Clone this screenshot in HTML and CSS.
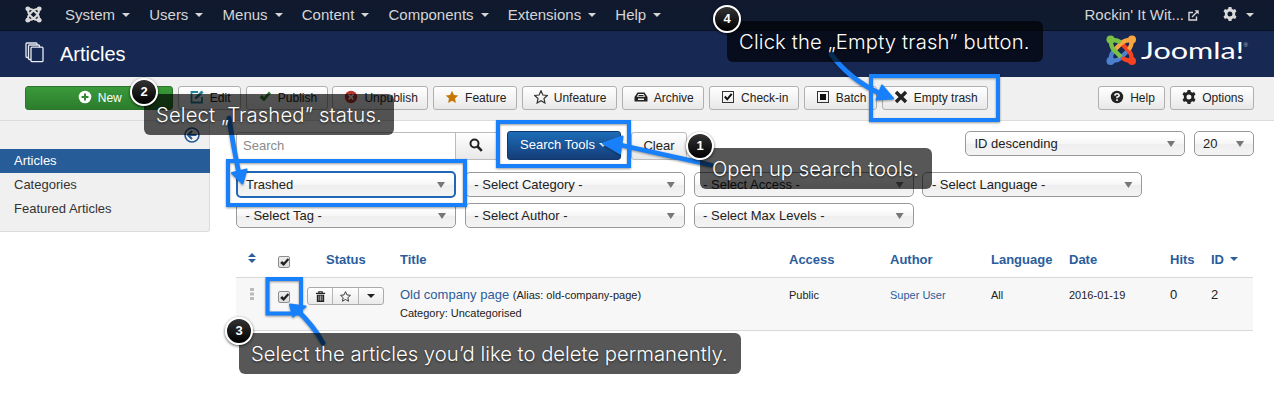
FILE: index.html
```html
<!DOCTYPE html>
<html lang="en">
<head>
<meta charset="utf-8">
<title>Articles</title>
<link rel="stylesheet" href="styles.css">
</head>
<body>
<svg class="defs" width="0" height="0">
  <symbol id="gear" viewBox="0 0 14 14"><path fill-rule="evenodd" d="M5.6 0h2.8l.4 1.8 1.5.9 1.8-.6 1.4 2.4L12.100 5.800v2.400l1.400 1.300-1.400 2.400-1.800-.6-1.500.9-.4 1.800H5.600l-.4-1.800-1.500-.9-1.800.6L.5 9.500l1.400-1.300V5.800L.5 4.500l1.400-2.400 1.800.6 1.500-.9zM7 4.500a2.500 2.500 0 1 0 0 5 2.500 2.500 0 0 0 0-5z"/></symbol>
  <symbol id="star" viewBox="0 0 14 14"><path d="M7 .8l1.900 4.200 4.400.5-3.300 3 .9 4.500L7 10.800 3.100 13l.9-4.500-3.300-3 4.400-.5z"/></symbol>
  <symbol id="tick" viewBox="0 0 14 14"><path d="M1.500 7.500L4 5l2 2 5-5.500L13 3.500 6 11.500z"/></symbol>
</svg>
<div class="page">
  <nav class="navbar">
    <svg class="brand" viewBox="0 0 18 18"><g fill="none" stroke="#d9d9d9" stroke-width="2.200"><path d="M3.200 4Q3 7.500 5 9.500L9 13.500M4 3.200Q7.500 3 9.500 5L10.500 6M14.800 4Q15 7.500 13 9.500L12 10.500M14 3.200Q10.500 3 8.500 5L4.500 9M14.800 14Q15 10.500 13 8.500L9 4.500M14 14.800Q10.500 15 8.500 13L7.500 12M3.200 14Q3 10.500 5 8.500M4 14.800Q7.500 15 9.500 13L13.500 9"/></g><g fill="#d9d9d9"><circle cx="3" cy="3" r="2.600"/><circle cx="15" cy="3" r="2.600"/><circle cx="3" cy="15" r="2.600"/><circle cx="15" cy="15" r="2.600"/></g></svg>
    <ul class="menu">
      <li>System<i class="caret"></i></li><li>Users<i class="caret"></i></li><li>Menus<i class="caret"></i></li><li>Content<i class="caret"></i></li><li>Components<i class="caret"></i></li><li>Extensions<i class="caret"></i></li><li>Help<i class="caret"></i></li>
    </ul>
    <div class="site">Rockin' It Wit...
      <svg class="ext" viewBox="0 0 11 11" fill="none" stroke="#d9d9d9" stroke-width="1.400"><path d="M5 2.500H1v7.500h7.500V6.500M4 7l5.500-5.500"/><path d="M6.500.3h4.200v4.200z" fill="#d9d9d9" stroke="none"/></svg>
    </div>
    <div class="user"><svg class="gear" fill="#d9d9d9"><use href="#gear"/></svg><i class="caret"></i></div>
  </nav>

  <header class="header">
    <svg class="stack" viewBox="0 0 19 21" fill="#172853" stroke="#e8ecf4" stroke-width="1.300"><rect x="1" y="1" width="11" height="14.500" rx="1"/><rect x="3.500" y="3" width="11" height="14.500" rx="1"/><rect x="6" y="5.200" width="12" height="14.500" rx="1"/></svg>
    <h1>Articles</h1>
    <svg class="logo" viewBox="0 0 146 32" role="img">
      <g fill="none" stroke-width="4.400">
        <path stroke="#4b80cf" d="M5 25.500Q11 26.500 15 22.500L22 15.500M5 25Q4.500 19 8 15.500"/>
        <path stroke="#f44321" d="M25.500 25Q26 19 22.500 15.500L15.500 8.500M25.500 25.500Q19.500 26 16 22.500"/>
        <path stroke="#f9a541" d="M25 5Q19.500 4.500 15.500 8L8.500 15M25.500 5.500Q26 11 22.500 14.500"/>
        <path stroke="#7ac143" d="M5 5.500Q4.500 11 8 15L15 22M5 5Q11 4.500 14.500 7.500"/>
      </g>
      <circle cx="4.500" cy="4.500" r="4" fill="#7ac143"/><circle cx="26" cy="4.500" r="4" fill="#f9a541"/><circle cx="4.500" cy="26" r="4" fill="#4b80cf"/><circle cx="26" cy="26" r="4" fill="#f44321"/>
      <text class="wordmark" x="35" y="23.500" textLength="103" lengthAdjust="spacingAndGlyphs">Joomla!</text>
      <text class="reg" x="137.500" y="12">®</text>
    </svg>
  </header>

  <div class="toolbar">
    <button class="btn new"><svg viewBox="0 0 14 14"><circle cx="7" cy="7" r="6.300" fill="#fff"/><path d="M7 3.500v7M3.500 7h7" stroke="#348a34" stroke-width="2"/></svg>New</button>
    <button class="btn"><svg viewBox="0 0 14 14" fill="none" stroke="#2384a0" stroke-width="1.800"><path d="M8 2H1.500v10.500H12V7"/><path d="M4.500 9.500l1-3L11.500.5l2 2-6 6z" fill="#2384a0" stroke="none"/></svg>Edit</button>
    <button class="btn"><svg fill="#378137"><use href="#tick"/></svg>Publish</button>
    <button class="btn"><svg viewBox="0 0 14 14"><circle cx="7" cy="7" r="6.200" fill="#bd362f"/><path d="M4.600 4.600l4.800 4.800M9.400 4.600L4.600 9.400" stroke="#fff" stroke-width="1.500"/></svg>Unpublish</button>
    <button class="btn"><svg fill="#c67605"><use href="#star"/></svg>Feature</button>
    <button class="btn"><svg fill="none" stroke="#333" stroke-width="1.200"><use href="#star"/></svg>Unfeature</button>
    <button class="btn"><svg viewBox="0 0 14 14" fill="#222"><path fill-rule="evenodd" d="M3.500 2.500h7L13.500 7v4.500H.5V7zM4.300 4L2.700 6.800h8.600L9.700 4zM4 8.500V10h6V8.500z"/><path d="M4.500 5h5v1h-5z"/></svg>Archive</button>
    <button class="btn"><svg viewBox="0 0 14 14" fill="none" stroke="#333"><rect x="1.500" y="1.500" width="11" height="11"/><path d="M3.800 6.500l2.400 2.800 4.500-5.500" stroke="#111" stroke-width="2"/></svg>Check-in</button>
    <button class="btn"><svg viewBox="0 0 14 14"><rect x="1.500" y="1.500" width="11" height="11" fill="none" stroke="#333"/><path d="M4 4h6v6H4z" fill="#111"/></svg>Batch</button>
    <button class="btn"><svg viewBox="0 0 14 14"><path d="M2 2l10 10M12 2L2 12" stroke="#222" stroke-width="3.400"/></svg>Empty trash</button>
    <button class="btn help"><svg viewBox="0 0 14 14"><circle cx="7" cy="7" r="6.200" fill="#222"/><path d="M4.800 5.600Q5 3.700 7 3.700T9.200 5.400Q9.200 6.500 7 7.200V8.300M7 9.300v1.600" fill="none" stroke="#fff" stroke-width="1.600"/></svg>Help</button>
    <button class="btn"><svg fill="#222"><use href="#gear"/></svg>Options</button>
  </div>

  <div class="content">
    <aside class="sidebar">
      <svg class="collapse" viewBox="0 0 16 16" fill="none" stroke="#265a97" stroke-width="1.600"><circle cx="8" cy="8" r="7"/><path d="M12.500 8H4.500M8 4L4 8l4 4" stroke-width="2"/></svg>
      <a class="active">Articles</a><a>Categories</a><a>Featured Articles</a>
    </aside>
    <main class="main">
      <div class="search">
        <div class="field">Search</div>
        <button class="plain find"><svg viewBox="0 0 14 14" fill="none" stroke="#222"><circle cx="5.500" cy="5.500" r="4" stroke-width="2"/><path d="M8.500 8.500l4.300 4.300" stroke-width="2.600"/></svg></button>
        <button class="tools">Search Tools<i class="caret"></i></button>
        <button class="plain clear">Clear</button>
        <div class="select order">ID descending</div>
        <div class="select limit">20</div>
      </div>
      <div class="filters">
        <div class="select focus">Trashed</div><div class="select">- Select Category -</div><div class="select">- Select Access -</div><div class="select">- Select Language -</div>
        <div class="select">- Select Tag -</div><div class="select">- Select Author -</div><div class="select">- Select Max Levels -</div>
      </div>
      <div class="table">
        <div class="row head">
          <span class="sort"><svg viewBox="0 0 8 10" fill="#2a5d9c"><path d="M0 4l4-4 4 4zM0 6h8l-4 4z"/></svg></span>
          <span class="check"><i class="box"><svg><use href="#tick"/></svg></i></span>
          <span class="status">Status</span><span>Title</span><span>Access</span><span>Author</span><span>Language</span><span>Date</span><span>Hits</span><span>ID<i class="caret"></i></span>
        </div>
        <div class="row item">
          <span class="grip"><svg viewBox="0 0 4 12" fill="#bbb"><path d="M0 0h4v3H0zM0 4.500h4v3H0zM0 9h4v3H0z"/></svg></span>
          <span class="check"><i class="box"><svg><use href="#tick"/></svg></i></span>
          <span class="group">
            <b><svg viewBox="0 0 12 12"><path d="M1 2.500h10M4.200 1.800V.8h3.600v1" fill="none" stroke="#222" stroke-width="1.300"/><path d="M2 4h8v8H2z" fill="#222"/><path d="M4.200 5v5.500M6 5v5.500M7.800 5v5.500" stroke="#eee" stroke-width=".7"/></svg></b>
            <b><svg fill="none" stroke="#333" stroke-width="1.200" viewBox="0 0 14 14"><use href="#star"/></svg></b>
            <b><i class="caret"></i></b>
          </span>
          <span class="title"><a>Old company page</a> <small>(Alias: old-company-page)</small><small class="cat">Category: Uncategorised</small></span>
          <small>Public</small><small><a>Super User</a></small><small>All</small><small>2016-01-19</small><span>0</span><span>2</span>
        </div>
      </div>
    </main>
  </div>

  <svg class="marks" viewBox="0 0 1274 406">
    <g fill="none" stroke="#1780fa" stroke-width="4">
      <rect x="228" y="161" width="237" height="44"/><rect x="498" y="122" width="131" height="44"/><rect x="871" y="76" width="127" height="44"/><rect x="267.500" y="279" width="33.500" height="34.500"/>
      <path d="M711 165L618 144.500M229 118Q233 145 239 174M831 54Q849 79 881 94M323 343Q314 326 296 309" stroke-width="4.800" stroke-linecap="round"/>
    </g>
    <path fill="#1780fa" stroke="#1780fa" stroke-width="2" stroke-linejoin="round" d="M603 143.500L622.500 136.500 620 153.500zM232 173L246.500 169.500 242.500 183.500zM882 85.500L893 98.500 876.500 99.500zM290 304.500L305.500 306.500 293 316.500z"/>
  </svg>
  <div class="note n1"><em>1</em><p>Open up search tools.</p></div>
  <div class="note n2"><em>2</em><p>Select „Trashed” status.</p></div>
  <div class="note n3"><em>3</em><p>Select the articles you’d like to delete permanently.</p></div>
  <div class="note n4"><em>4</em><p>Click the „Empty trash” button.</p></div>
</div>
</body>
</html>
```
FILE: styles.css
```css
* { box-sizing: border-box; }
body { margin: 0; background: #fff; font: 13px/18px "Liberation Sans", Arial, sans-serif; color: #222; }
.page { position: relative; width: 1274px; height: 406px; overflow: hidden; }
.defs { position: absolute; }
button { font-family: inherit; margin: 0; }
.caret { display: inline-block; border: 4px solid transparent; border-top-color: currentColor; border-bottom: 0; margin-left: 7px; vertical-align: middle; }

.navbar { display: flex; align-items: center; height: 31px; padding: 0 20px 0 25px; background: linear-gradient(#10182d, #0f1b30); border-bottom: 1px solid #0a1222; color: #d5d5d5; font-size: 15px; }
.brand { width: 17px; height: 17px; margin: -2px 23px 0 0; }
.menu { display: flex; gap: 19.200px; list-style: none; margin: 0; padding: 0; }
.menu .caret { margin-bottom: 2px; }
.site { margin-left: auto; display: flex; align-items: center; gap: 4px; }
.ext { width: 11px; height: 11px; }
.user { display: flex; align-items: center; margin-left: 24px; }
.gear { width: 14px; height: 14px; margin: -3px 2px 0 0; }
.user .caret { margin-left: 7px; }

.header { display: flex; align-items: center; height: 46px; padding: 0 24px 0 25px; background: #172853; }
.stack { width: 19px; height: 21px; margin-top: -3px; }
.header h1 { margin: 0 0 0 16px; font-size: 20px; font-weight: 400; color: #fff; }
.logo { width: 146px; height: 32px; margin: -6px -2px 0 auto; }
.wordmark { font: 400 23px Lato, sans-serif; fill: #fff; }
.reg { font: 6px "Liberation Sans", sans-serif; fill: #b9c3da; }

.toolbar { display: flex; gap: 4.800px; height: 44px; padding: 9px 20px 0 25px; background: #f0f0f0; border-bottom: 1px solid #dcdcdc; }
.btn { display: flex; align-items: center; gap: 6px; height: 24px; padding: 0 9.500px 0 11px; border: 1px solid #b0b0b0; border-radius: 3px; background: linear-gradient(#fff, #e8e8e8); font-size: 12px; color: #222; white-space: nowrap; }
.btn svg { width: 14px; height: 14px; flex: none; margin-top: -2px; overflow: visible; }
.new { width: 148px; justify-content: center; background: linear-gradient(#3a9a3a, #2c7d2c); border-color: #2b762b; color: #fff; }
.help { margin-left: auto; }

.content { display: flex; }
.sidebar { width: 210px; height: 111px; padding-top: 28px; position: relative; background: #f0f0f0; border: solid #dcdcdc; border-width: 0 1px 1px 0; border-radius: 0 0 3px; }
.sidebar a { display: block; height: 24px; padding-left: 14px; line-height: 23px; color: #333; }
.sidebar .active { width: 210px; background: #265c98; color: #fff; }
.collapse { position: absolute; right: 9px; top: 6px; width: 16px; height: 16px; }
.main { width: 1018px; margin-left: 26px; padding-top: 10px; }
.search { display: flex; align-items: flex-start; height: 41px; }
.field { width: 220px; height: 28px; margin-top: 1px; padding: 0 6px; border: 1px solid #bbb; border-radius: 3px 0 0 3px; line-height: 26px; color: #8a8a8a; }
.plain { height: 28px; margin-top: 1px; border: 1px solid #bbb; background: linear-gradient(#fff, #e8e8e8); font-size: 13px; color: #222; }
.find { width: 42px; margin-left: -1px; padding: 0 0 2px 13px; text-align: left; }
.find svg { width: 14px; height: 14px; display: block; }
.tools { width: 114px; height: 29px; margin-left: 10px; padding: 0 0 3px 12px; border: 1px solid #12376c; border-radius: 3px; background: linear-gradient(#1d6cb8, #153d78); color: #fff; font-size: 13px; text-align: left; white-space: nowrap; }
.tools .caret { margin-left: 4px; }
.clear { width: 56px; margin-left: 10px; padding: 0 0 1px; border-radius: 3px; }
.order { margin-left: auto; }
.select { position: relative; width: 220px; height: 25px; padding-left: 8.500px; border: 1px solid #999; border-radius: 5px; line-height: 23px; background: linear-gradient(#fff 20%, #f6f6f6 50%, #eee 52%, #f4f4f4); }
.select::after { content: ""; position: absolute; right: 9px; top: 9px; width: 8px; height: 6px; background: #777; clip-path: polygon(0 0, 100% 0, 50% 100%); }
.limit { width: 60px; margin-left: 9px; padding-left: 8px; }
.focus { margin: -1px 0; height: 27px; border: 2px solid #2267b5; padding-left: 8px; }
.filters { display: grid; grid-template-columns: repeat(4, 220px); gap: 6px 8.800px; }

.table { margin-top: 13px; width: 1017px; }
.row { display: grid; grid-template-columns: 32px 39px 93px 389px 101px 101px 78px 101px 41px 42px; }
.head { height: 36px; padding-top: 10px; font-weight: 700; color: #2a5d9c; }
.head .caret { margin: 0 0 4px 6px; }
.status { padding-left: 19px; }
.sort svg { display: block; width: 8px; height: 10px; margin: 2px 0 0 12px; }
.check { padding-left: 10px; }
.box { display: block; width: 12px; height: 12px; margin-top: 5px; border: 1px solid #8c8c8c; border-radius: 2px; background: linear-gradient(#eee, #ddd); }
.box svg { display: block; width: 11px; height: 11px; fill: #222; }
.item { height: 54px; padding-top: 8px; border: solid #d9d9d9; border-width: 1px 0; background: #f7f7f7; }
.item a { color: #2a5d9c; }
.item small { font-size: 11px; line-height: 18px; }
.cat { display: block; }
.grip svg { display: block; width: 4px; height: 12px; margin: 2px 0 0 14px; }
.group { display: flex; width: 77px; height: 18px; margin-top: 1px; border: 1px solid #aaa; border-radius: 3px; background: linear-gradient(#fff, #eaeaea); overflow: hidden; }
.group b { flex: 1; display: flex; align-items: center; justify-content: center; }
.group b + b { border-left: 1px solid #b5b5b5; }
.group svg { width: 11px; height: 11px; overflow: visible; }
.group .caret { margin: 0; }

/* Tutorial annotations laid over the interface */
.marks { position: absolute; inset: 0; width: 1274px; height: 406px; filter: drop-shadow(0 1px 1px rgba(0,0,0,.4)); }
.note { position: absolute; height: 41px; padding-left: 12px; border-radius: 6px; background: rgba(0,0,0,.66); color: #fff; white-space: nowrap; }
.note p { margin: 0; font: 300 20.250px/42px Inter, "Liberation Sans", sans-serif; text-shadow: 0 1px 2px rgba(0,0,0,.6); }
.note em { position: absolute; left: -14px; top: -16px; width: 28px; height: 28px; border: 2px solid #fff; border-radius: 50%; background: linear-gradient(#333, #000); box-shadow: 0 1px 3px rgba(0,0,0,.7); font: 700 13px/24px "Liberation Sans", sans-serif; text-align: center; }
.n1 { left: 700px; top: 148px; width: 232px; }
.n2 { left: 144px; top: 94px; width: 250px; }
.n3 { left: 239px; top: 333px; width: 502px; }
.n4 { left: 727px; top: 21px; width: 316px; }
.n2 p, .n4 p { letter-spacing: .150px; }
```
